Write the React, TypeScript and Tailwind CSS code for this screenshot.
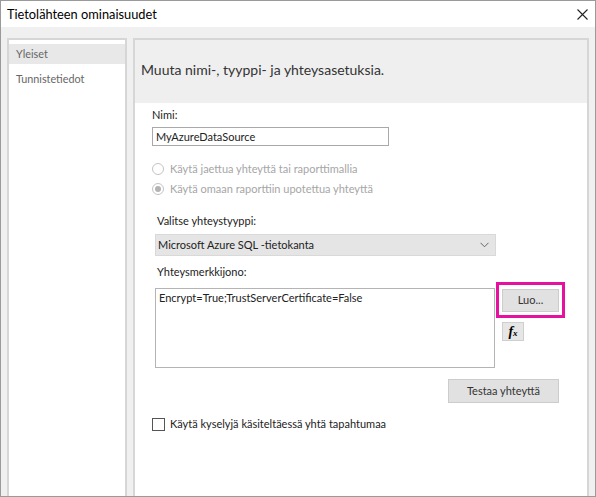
import { ReactNode } from "react";

const font = { fontFamily: 'Lato, "Noto Sans", "Liberation Sans", sans-serif' };

function Radio({ checked, children }: { checked?: boolean, children: ReactNode }) {
  return (
    <div className="flex items-center h-[20px] text-[#a6a6a6]">
      <span className="w-[12px] h-[12px] rounded-full border border-[#c4c4c4] bg-white flex items-center justify-center">
        {checked && <span className="w-[6px] h-[6px] rounded-full bg-[#b3b3b3]" />}
      </span>
      <span className="ml-[6px]">{children}</span>
    </div>
  );
}

export default function App() {
  return (
    <div className="w-[596px] h-[497px] overflow-hidden bg-white text-[11px] text-[#222] leading-[16px]" style={font}>
      <div className="w-full h-full border border-[#9a9a9a] flex flex-col">
        <div className="h-[26px] flex items-center justify-between pl-[6px] pr-[7px] bg-white shrink-0">
          <span className="text-[12.8px] text-black">Tietolähteen ominaisuudet</span>
          <svg width="11" height="11" viewBox="0 0 11 11" className="mt-[1px]">
            <path d="M0.5 0.5 L10.5 10.5 M10.5 0.5 L0.5 10.5" stroke="#222" strokeWidth="1.1" />
          </svg>
        </div>
        <div className="flex-1 bg-[#f0f0f0] flex gap-[6px] pl-[6px] pr-[5px] pt-[11px] min-h-0">
          <div className="w-[120px] bg-white border-2 border-b-0 border-[#d6d6d6] pt-[4px] text-[#666] text-[10.8px]">
            <div className="h-[20px] bg-[#e8e8e8] flex items-center pl-[7px]">Yleiset</div>
            <div className="h-[26px] flex items-center pl-[7px] mt-[2px]">Tunnistetiedot</div>
          </div>
          <div className="w-[456px] border-2 border-b-0 border-[#d6d6d6] flex flex-col">
            <div className="h-[63px] bg-[#efefef] flex items-center pl-[6px] pb-[3px] shrink-0">
              <span className="text-[14px] text-[#333]">Muuta nimi-, tyyppi- ja yhteysasetuksia.</span>
            </div>
            <div className="flex-1 bg-white pl-[17px] pt-[4px]">
              <div className="h-[16px]">Nimi:</div>
              <div className="mt-[4px] w-[237px] h-[19px] border border-[#a9a9a9] flex items-center pl-[3px]">MyAzureDataSource</div>
              <div className="mt-[13px]">
                <Radio>Käytä jaettua yhteyttä tai raporttimallia</Radio>
                <Radio checked>Käytä omaan raporttiin upotettua yhteyttä</Radio>
              </div>
              <div className="mt-[14px] ml-[5px]">Valitse yhteystyyppi:</div>
              <div className="mt-[5px] ml-[3px] w-[341px] h-[22px] bg-[#e5e5e5] border border-[#d9d9d9] flex items-center justify-between pl-[2px] pr-[6px]">
                <span>Microsoft Azure SQL -tietokanta</span>
                <svg width="9" height="6" viewBox="0 0 9 6">
                  <path d="M0.5 0.8 L4.5 4.8 L8.5 0.8" stroke="#666" strokeWidth="1" fill="none" />
                </svg>
              </div>
              <div className="mt-[8px] ml-[5px]">Yhteysmerkkijono:</div>
              <div className="mt-[8px] ml-[3px] flex">
                <div className="w-[340px] h-[80px] border border-[#b4b4b4] pl-[3px] pt-[1px]">Encrypt=True;TrustServerCertificate=False</div>
                <div className="ml-[1px] -mt-[6px] flex flex-col">
                  <div className="w-[69px] h-[36px] border-[3px] border-[#e6119e] flex items-center justify-center">
                    <div className="w-[57px] h-[23px] bg-[#e1e1e1] border border-[#cccccc] flex items-center justify-center text-[#333]">Luo...</div>
                  </div>
                  <div className="mt-[4px] ml-[6px] w-[22px] h-[19px] bg-[#e6e6e6] border border-[#cfcfcf] flex items-center justify-center">
                    <span className="font-bold italic text-[14px] leading-none text-black" style={{ fontFamily: '"Liberation Serif", serif' }}>
                      f<span className="text-[9px]">x</span>
                    </span>
                  </div>
                </div>
              </div>
              <div className="mt-[11px] ml-[296px] w-[111px] h-[24px] bg-[#e1e1e1] border border-[#cccccc] flex items-center justify-center text-[#333]">
                Testaa yhteyttä
              </div>
              <div className="mt-[13px] flex items-center">
                <span className="w-[13px] h-[13px] border border-[#555] bg-white" />
                <span className="ml-[5px]">Käytä kyselyjä käsiteltäessä yhtä tapahtumaa</span>
              </div>
            </div>
          </div>
        </div>
      </div>
    </div>
  );
}
